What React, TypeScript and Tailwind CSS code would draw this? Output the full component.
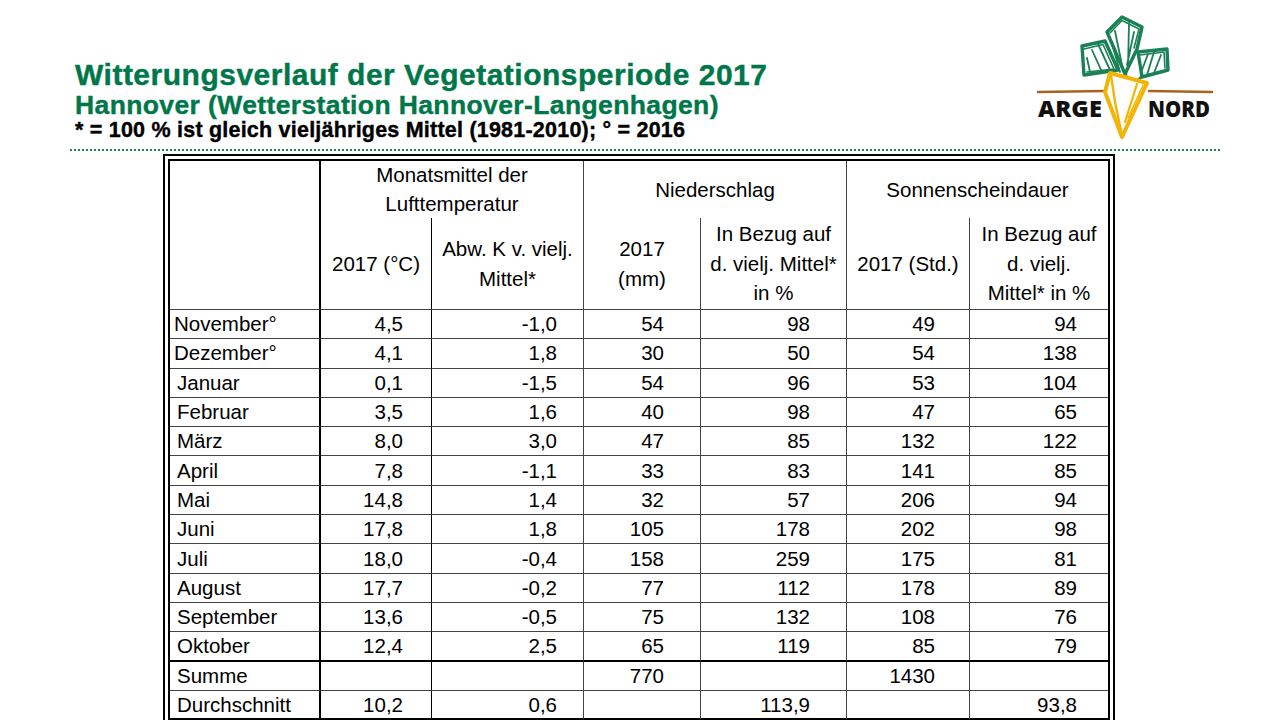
import React from 'react';

type Row = {
  name: string;
  cells: string[];
  tight?: boolean;
};

const rows: Row[] = [
  { name: 'November°', cells: ['4,5', '-1,0', '54', '98', '49', '94'], tight: true },
  { name: 'Dezember°', cells: ['4,1', '1,8', '30', '50', '54', '138'], tight: true },
  { name: 'Januar', cells: ['0,1', '-1,5', '54', '96', '53', '104'] },
  { name: 'Februar', cells: ['3,5', '1,6', '40', '98', '47', '65'] },
  { name: 'März', cells: ['8,0', '3,0', '47', '85', '132', '122'] },
  { name: 'April', cells: ['7,8', '-1,1', '33', '83', '141', '85'] },
  { name: 'Mai', cells: ['14,8', '1,4', '32', '57', '206', '94'] },
  { name: 'Juni', cells: ['17,8', '1,8', '105', '178', '202', '98'] },
  { name: 'Juli', cells: ['18,0', '-0,4', '158', '259', '175', '81'] },
  { name: 'August', cells: ['17,7', '-0,2', '77', '112', '178', '89'] },
  { name: 'September', cells: ['13,6', '-0,5', '75', '132', '108', '76'] },
  { name: 'Oktober', cells: ['12,4', '2,5', '65', '119', '85', '79'] },
  { name: 'Summe', cells: ['', '', '770', '', '1430', ''] },
  { name: 'Durchschnitt', cells: ['10,2', '0,6', '', '113,9', '', '93,8'] },
];

// right padding of each value column, read off the slide
const valuePad = ['pr-[28px]', 'pr-[26px]', 'pr-[36px]', 'pr-[36px]', 'pr-[34px]', 'pr-[31px]'];

function Logo() {
  const leaf = '#1a8055';
  const carrot = '#f3b505';
  return (
    <svg width="200" height="140" viewBox="0 0 200 140" className="block">
      {/* soil line */}
      <path d="M8 82 L75 81" stroke="#a9631f" strokeWidth="2.6" strokeLinecap="round" />
      <path d="M119 81 L182 82" stroke="#a9631f" strokeWidth="2.6" strokeLinecap="round" />

      {/* leaves, drawn as rough double strokes */}
      <g fill="none" stroke={leaf} strokeWidth="3.4" strokeLinejoin="round" strokeLinecap="round">
        <path d="M52 36 L75 31 L88 60 L54 65 Z" />
        <path d="M54 39 L73 34.5 L84 59 L57 62" strokeWidth="1.6" />
        <path d="M68 34 L80 60 M62 40 L72 62 M57 48 L60 62" strokeWidth="1.8" />

        <path d="M77 22 L92 7 L112 17 L107 39 L95 64 Z" />
        <path d="M80 23 L92 10.5 L109 19 L104 38" strokeWidth="1.6" />
        <path d="M85 21 L93 60 M99 13 L98 58 M104 22 L97 55 M81 30 L90 62" strokeWidth="1.8" />

        <path d="M108 42 L137 39 L138 60 L112 67 Z" />
        <path d="M110 45 L134 42 L135 58" strokeWidth="1.6" />
        <path d="M124 42 L117 65 M131 45 L124 63 M118 44 L112 60" strokeWidth="1.8" />

        <path d="M84 63 L90 66 M96 63 L96 67 M112 66 L107 71" strokeWidth="2.4" />
      </g>

      {/* carrot */}
      <path
        d="M80 63 L117 73 L92 127 L75 82 Z"
        fill="#ffffff"
        stroke={carrot}
        strokeWidth="4"
        strokeLinejoin="round"
      />
      <g fill="none" stroke={carrot} strokeLinecap="round">
        <path d="M81 65 L85 92 L91 121" strokeWidth="2.4" />
        <path d="M107 74 L95 112" strokeWidth="2.2" />
        <path d="M113 75 L98 108" strokeWidth="1.4" />
      </g>

      <text
        x="8"
        y="107"
        textLength="64"
        lengthAdjust="spacingAndGlyphs"
        fontFamily="'Open Sans', 'Liberation Sans', sans-serif"
        fontWeight="800"
        fontSize="23"
        fill="#111111"
      >
        ARGE
      </text>
      <text
        x="118"
        y="107"
        textLength="62"
        lengthAdjust="spacingAndGlyphs"
        fontFamily="'Open Sans', 'Liberation Sans', sans-serif"
        fontWeight="800"
        fontSize="23"
        fill="#111111"
      >
        NORD
      </text>
    </svg>
  );
}

export default function App() {
  return (
    <div className="w-[1280px] h-[720px] overflow-hidden bg-white font-['Liberation_Sans',Arial,sans-serif] text-black">
      {/* Header */}
      <div className="h-[149px] flex justify-between items-start">
        <div className="pl-[75px] pt-[60px] font-bold [-webkit-text-stroke:0.4px]">
          <div className="text-[30px] leading-[30px] tracking-[0.5px] text-[#00774a] whitespace-nowrap">
            Witterungsverlauf der Vegetationsperiode 2017
          </div>
          <div className="mt-[2px] text-[26.5px] leading-[26px] tracking-[0.38px] text-[#00774a] whitespace-nowrap">
            Hannover (Wetterstation Hannover-Langenhagen)
          </div>
          <div className="mt-[2px] text-[21.5px] leading-[21px] tracking-[0.22px] whitespace-nowrap">
            * = 100 % ist gleich vieljähriges Mittel (1981-2010); ° = 2016
          </div>
        </div>
        <div className="mt-[10px] mr-[50px]">
          <Logo />
        </div>
      </div>

      {/* dotted rule */}
      <div className="ml-[70px] w-[1150px] h-[2px] bg-[linear-gradient(to_right,#23804f_50%,transparent_50%)] bg-[length:4px_2px]" />

      {/* Table */}
      <div className="mt-[3px] ml-[163px] w-[952px] border-2 border-black p-[3px]">
        <table className="table-fixed border-separate border-spacing-0 border-2 border-black w-[942px] text-[20.5px] leading-[29.5px] font-normal">
          <colgroup>
            <col className="w-[151px]" />
            <col className="w-[111px]" />
            <col className="w-[152px]" />
            <col className="w-[117px]" />
            <col className="w-[146px]" />
            <col className="w-[123px]" />
            <col className="w-[138px]" />
          </colgroup>
          <thead>
            <tr className="h-[57px]">
              <th rowSpan={2} className="border-r-2 border-b border-r-black border-b-[#444]" />
              <th colSpan={2} className="font-normal leading-[28.5px] border-r border-[#444] align-middle">
                Monatsmittel der
                <br />
                Lufttemperatur
              </th>
              <th colSpan={2} className="font-normal border-r border-[#444] align-middle">
                Niederschlag
              </th>
              <th colSpan={2} className="font-normal align-middle">
                Sonnenscheindauer
              </th>
            </tr>
            <tr className="h-[92px]">
              <th className="font-normal border-r border-b border-r-black border-b-[#444]">2017 (°C)</th>
              <th className="font-normal border-r border-b border-[#444]">
                Abw. K v. vielj.
                <br />
                Mittel*
              </th>
              <th className="font-normal border-r border-b border-[#444]">
                2017
                <br />
                (mm)
              </th>
              <th className="font-normal border-r border-b border-[#444]">
                In Bezug auf
                <br />
                d. vielj. Mittel*
                <br />
                in %
              </th>
              <th className="font-normal border-r border-b border-[#444]">2017 (Std.)</th>
              <th className="font-normal border-b border-[#444]">
                In Bezug auf
                <br />
                d. vielj.
                <br />
                Mittel* in %
              </th>
            </tr>
          </thead>
          <tbody className="leading-[26px]">
            {rows.map((row, i) => {
              const heavy = i === 11 || i === rows.length - 1;
              const bottom = heavy ? 'border-b-2 border-b-black' : 'border-b border-b-[#444]';
              return (
                <tr key={row.name} className="h-[29.3px]">
                  <td
                    className={`${row.tight ? 'pl-[4px]' : 'pl-[7px]'} whitespace-nowrap border-r-2 border-r-black ${bottom}`}
                  >
                    {row.name}
                  </td>
                  {row.cells.map((v, j) => (
                    <td
                      key={j}
                      className={`text-right ${valuePad[j]} ${bottom} ${
                        j < 5 ? (j === 0 ? 'border-r border-r-black' : 'border-r border-r-[#444]') : ''
                      }`}
                    >
                      {v}
                    </td>
                  ))}
                </tr>
              );
            })}
          </tbody>
        </table>
      </div>
    </div>
  );
}
